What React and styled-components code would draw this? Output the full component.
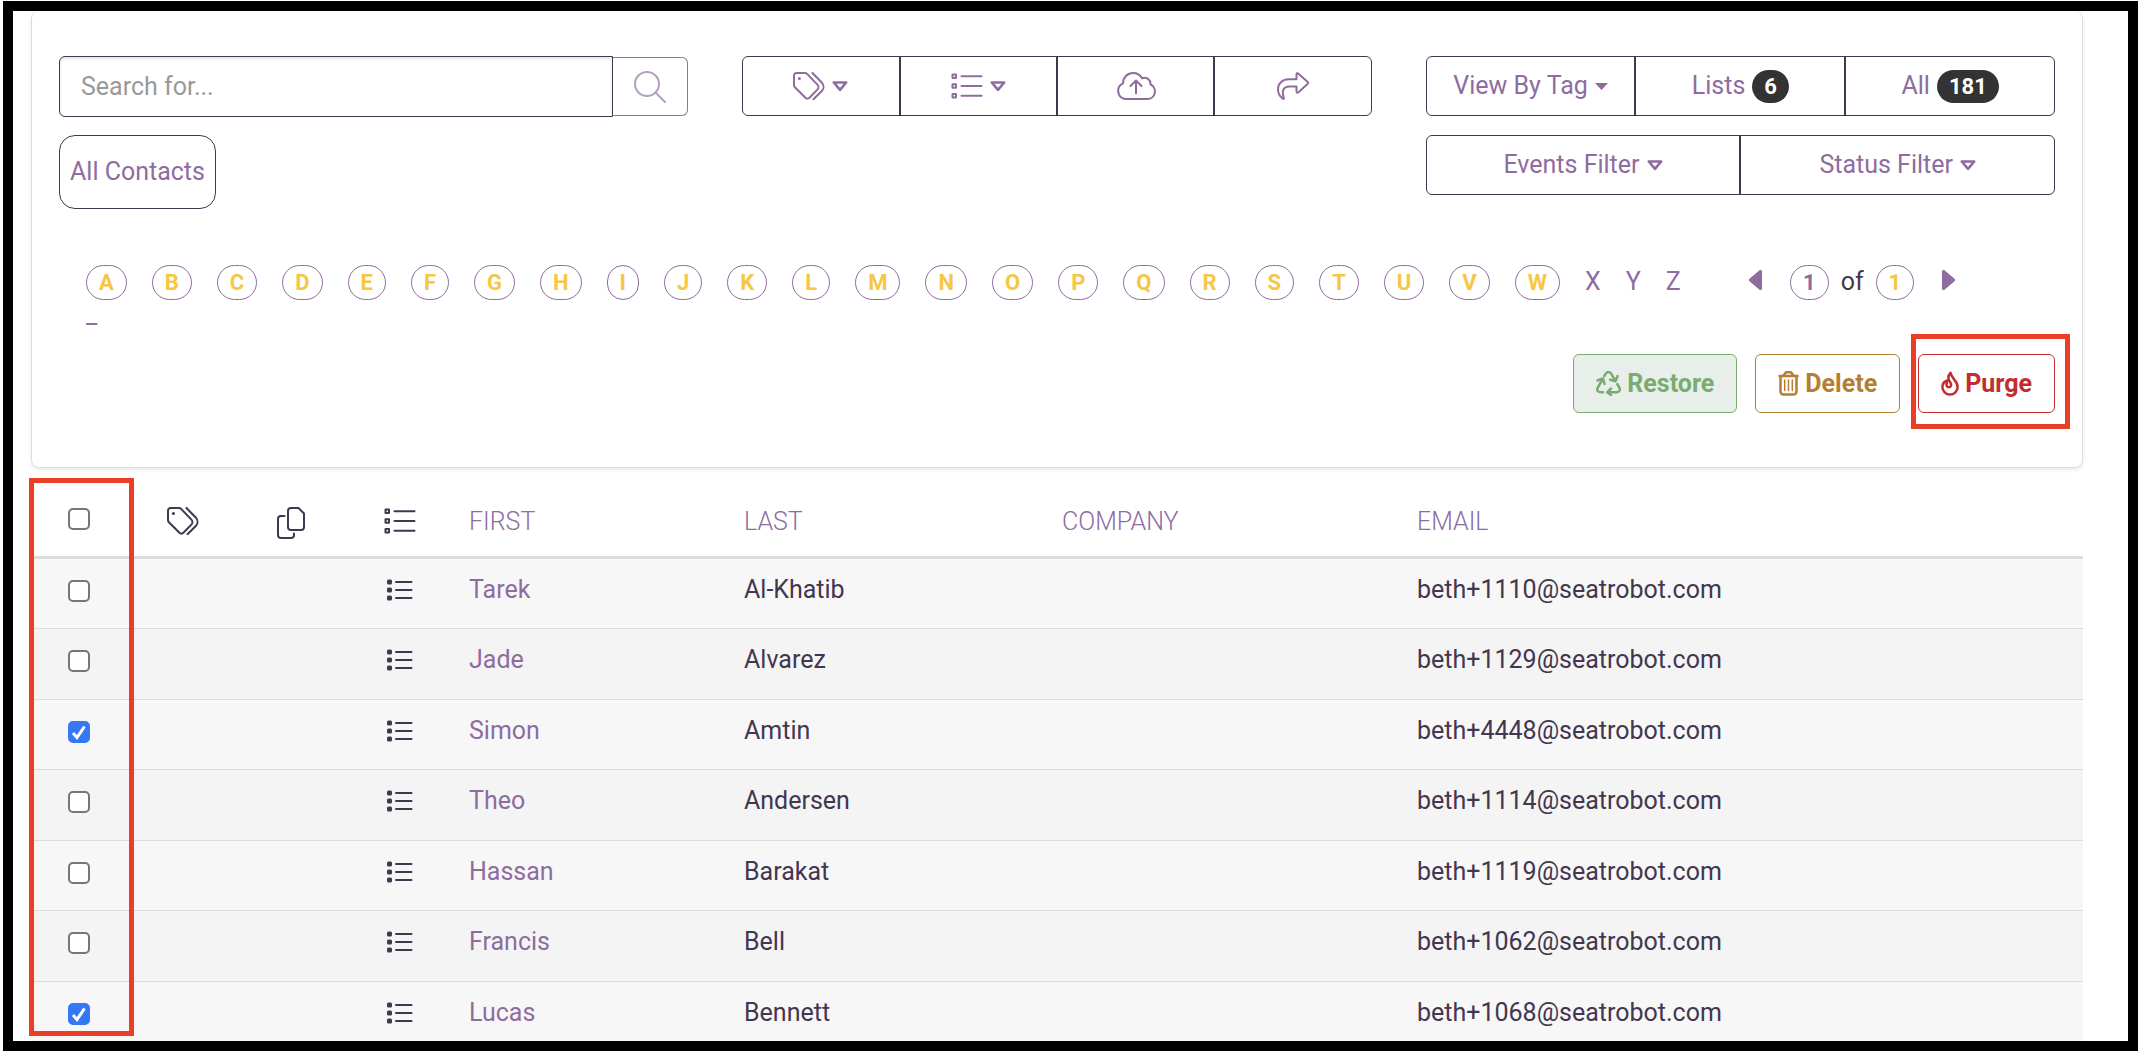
import React, {useState} from "react";
import styled, {createGlobalStyle} from "styled-components";

const LETTERS = 'ABCDEFGHIJKLMNOPQRSTUVW'.split('');
const EMPTY_LETTERS = ['X', 'Y', 'Z', '_'];

const CONTACTS = [
    {first: 'Tarek', last: 'Al-Khatib', company: '', email: 'beth+1110@seatrobot.com'},
    {first: 'Jade', last: 'Alvarez', company: '', email: 'beth+1129@seatrobot.com'},
    {first: 'Simon', last: 'Amtin', company: '', email: 'beth+4448@seatrobot.com'},
    {first: 'Theo', last: 'Andersen', company: '', email: 'beth+1114@seatrobot.com'},
    {first: 'Hassan', last: 'Barakat', company: '', email: 'beth+1119@seatrobot.com'},
    {first: 'Francis', last: 'Bell', company: '', email: 'beth+1062@seatrobot.com'},
    {first: 'Lucas', last: 'Bennett', company: '', email: 'beth+1068@seatrobot.com'},
];

const TagsIcon = () => (
    <Icon width="32" height="28" viewBox="0 0 32 28">
        <path d="M1 3.500A2.500 2.500 0 0 1 3.500 1H12a3 3 0 0 1 2.100.9l10.300 10.700a3.600 3.600 0 0 1 0 5l-8 8.200a2.800 2.800 0 0 1-4 0L1.900 15.200A3 3 0 0 1 1 13z"/>
        <path d="M19.500 1L29 10.800a6 6 0 0 1 0 8L20.500 27.300"/>
        <circle cx="6.400" cy="6.600" r="1.500" fill="currentColor" stroke="none"/>
    </Icon>
);

const ListIcon = () => (
    <Icon width="32" height="28" viewBox="0 0 32 28">
        <path d="M1.500 2.500h3.500v3.500H1.500zM1.500 12.300h3.500v3.500H1.500zM1.500 22.100h3.500v3.500H1.500z"/>
        <path d="M10.500 4.200H30.500M10.500 14H30.500M10.500 23.800H30.500"/>
    </Icon>
);

const RowListIcon = () => (
    <Icon width="26" height="22" viewBox="0 0 26 22">
        <g fill="currentColor" stroke="none">
            <rect x="0" y="0.500" width="5" height="5" rx="1.500"/>
            <rect x="0" y="8.500" width="5" height="5" rx="1.500"/>
            <rect x="0" y="16.500" width="5" height="5" rx="1.500"/>
        </g>
        <path d="M9 3H24.500M9 11H24.500M9 19H24.500"/>
    </Icon>
);

const CopyIcon = () => (
    <Icon width="28" height="32" viewBox="0 0 28 32">
        <path d="M14 1h7.500L27 6.500V20a3 3 0 0 1-3 3H14a3 3 0 0 1-3-3V4a3 3 0 0 1 3-3z"/>
        <path d="M7.500 9H4a3 3 0 0 0-3 3v16a3 3 0 0 0 3 3h10a3 3 0 0 0 3-3v-1.500"/>
    </Icon>
);

const CloudIcon = () => (
    <Icon width="40" height="28" viewBox="0 0 40 28">
        <path d="M9 27a8.300 8.300 0 0 1-2-15.700C7 5.500 11.500 1 17 1c4 0 7.300 2 9 5.300 4.300-1.600 8.800 1.200 8.500 6.200A7.600 7.600 0 0 1 31.500 27z"/>
        <path d="M20 21.500V9M14.500 14L20 8.500 25.500 14"/>
    </Icon>
);

const ShareIcon = () => (
    <Icon width="32" height="28" viewBox="0 0 32 28">
        <path d="M19.500 2.500v4.700H12C5.500 7.200 1 11 1 17.500c0 4 2 7 4.800 9.200.6.500 1.300-.1 1-.8C5.500 22 5.500 19.500 6.500 17.500 7.500 15.500 9.500 14.500 12.500 14.500h7v5c0 1.300 1 1.600 2 .8l9-8.300c.7-.6.7-1.600 0-2.200L21.500 1.700c-1-.8-2-.5-2 .8z"/>
    </Icon>
);

const SearchIcon = () => (
    <Icon width="32" height="32" viewBox="0 0 32 32">
        <circle cx="13" cy="13" r="12"/>
        <path d="M21.500 21.500L31 31"/>
    </Icon>
);

const RecycleIcon = () => (
    <Icon width="25" height="25" viewBox="0 0 25 25">
        <path d="M8.300 5l1.700-2.600a3 3 0 0 1 5 0L19.500 10M21.500 5l-2 5.200-5.300-1.500"/>
        <path d="M1.500 9.500L7 7.500l1.500 5.300M6.800 7.800L1.600 16.800a3 3 0 0 0 2.500 4.500H7"/>
        <path d="M21.300 13l2.200 3.800a3 3 0 0 1-2.500 4.500H11.500M15 17.500l-3.800 3.800L15 24"/>
    </Icon>
);

const TrashIcon = () => (
    <Icon width="21" height="25" viewBox="0 0 21 25">
        <path d="M1.500 5h18M5.500 4.500l1.700-2.300A2 2 0 0 1 9 1.300h3a2 2 0 0 1 1.800.9l1.700 2.300M2.500 5v15.500A3 3 0 0 0 5.500 23.600h10a3 3 0 0 0 3-3.100V5"/>
        <path d="M6.700 9v10.500M10.500 9v10.500M14.300 9v10.500" strokeWidth="1.500"/>
    </Icon>
);

const FireIcon = () => (
    <Icon width="18" height="25" viewBox="0 0 18 25">
        <path d="M9.500 1.800C6.500 5 7 8.500 9.200 11.200c1.600 2.200 1 5-1.200 5-2.200 0-3-2-2.200-4.200l.4-2.500C3 10.500 1.400 13 1.400 16a7.600 7.600 0 0 0 15.200 0C16.600 9.500 10.500 8 9.500 1.800z"/>
    </Icon>
);

const CaretOutline = () => (
    <Icon width="16" height="11" viewBox="0 0 16 11">
        <path d="M1.800 1.500h12.400L8 8.800z" strokeWidth="2.600"/>
    </Icon>
);

const CaretFilled = () => (
    <Icon width="13" height="7" viewBox="0 0 13 7">
        <path d="M0 0h13L6.500 7z" fill="currentColor" stroke="none"/>
    </Icon>
);

const PageArrow = ({next}) => (
    <Icon width="13" height="20" viewBox="0 0 13 20">
        <path
            d={next ? 'M1.500 1.500v17L11.500 10z' : 'M11.500 1.500v17L1.500 10z'}
            fill="currentColor"
            strokeWidth="3"
        />
    </Icon>
);

function App() {
    const [checked, setChecked] = useState([2, 6]);
    const [keyword, setKeyword] = useState('');

    const toggle = (index) => {
        setChecked(checked.includes(index) ? checked.filter((i) => i !== index) : [...checked, index]);
    };
    const toggleAll = (e) => {
        setChecked(e.target.checked ? CONTACTS.map((c, i) => i) : []);
    };

    return (
        <Page>
            <GlobalStyle/>
            <Frame>
                <Card>
                    <Toolbar>
                        <div>
                            <SearchBar>
                                <SearchInput
                                    aria-label="Search for"
                                    placeholder="Search for..."
                                    value={keyword}
                                    onChange={(e) => setKeyword(e.target.value)}
                                />
                                <SearchBtn aria-label="Search"><SearchIcon/></SearchBtn>
                            </SearchBar>
                            <AllContacts>All Contacts</AllContacts>
                        </div>
                        <div>
                            <BtnGroup>
                                <GroupBtn aria-label="Tags"><TagsIcon/><CaretOutline/></GroupBtn>
                                <GroupBtn aria-label="Lists"><ListIcon/><CaretOutline/></GroupBtn>
                                <GroupBtn aria-label="Upload"><CloudIcon/></GroupBtn>
                                <GroupBtn aria-label="Share"><ShareIcon/></GroupBtn>
                            </BtnGroup>
                        </div>
                        <Filters>
                            <BtnGroup>
                                <GroupBtn>View By Tag<CaretFilled/></GroupBtn>
                                <GroupBtn>Lists<Count>6</Count></GroupBtn>
                                <GroupBtn>All<Count>181</Count></GroupBtn>
                            </BtnGroup>
                            <BtnGroup>
                                <GroupBtn>Events Filter<CaretOutline/></GroupBtn>
                                <GroupBtn>Status Filter<CaretOutline/></GroupBtn>
                            </BtnGroup>
                        </Filters>
                    </Toolbar>
                    <LetterBar>
                        <Letters>
                            {LETTERS.map((letter) => (
                                <Pill key={letter} href={`#${letter}`}>{letter}</Pill>
                            ))}
                            {EMPTY_LETTERS.map((letter) => (
                                <PlainLetter key={letter} href={`#${letter}`}>{letter}</PlainLetter>
                            ))}
                        </Letters>
                        <Pager>
                            <PagerBtn aria-label="Previous page"><PageArrow/></PagerBtn>
                            <PageCount>
                                <Pill href="#page" $current>1</Pill>
                                of
                                <Pill href="#last">1</Pill>
                            </PageCount>
                            <PagerBtn aria-label="Next page"><PageArrow next/></PagerBtn>
                        </Pager>
                    </LetterBar>
                    <Actions>
                        <ActionBtn $color="#7aab70" $fill="#e8efea"><RecycleIcon/>Restore</ActionBtn>
                        <ActionBtn $color="#b57e30"><TrashIcon/>Delete</ActionBtn>
                        <PurgeWrap>
                            <ActionBtn $color="#c42d2d"><FireIcon/>Purge</ActionBtn>
                        </PurgeWrap>
                    </Actions>
                </Card>
                <TableWrap>
                    <Table>
                        <colgroup>
                            <Col $width={96}/>
                            <Col $width={112}/>
                            <Col $width={104}/>
                            <Col $width={114}/>
                            <Col $width={275}/>
                            <Col $width={318}/>
                            <Col $width={355}/>
                            <col/>
                        </colgroup>
                        <thead>
                            <tr>
                                <HeadCell $icon>
                                    <Checkbox
                                        aria-label="Select all"
                                        checked={checked.length === CONTACTS.length}
                                        onChange={toggleAll}
                                    />
                                </HeadCell>
                                <HeadCell $icon><TagsIcon/></HeadCell>
                                <HeadCell $icon><CopyIcon/></HeadCell>
                                <HeadCell $icon><ListIcon/></HeadCell>
                                <HeadCell>FIRST</HeadCell>
                                <HeadCell>LAST</HeadCell>
                                <HeadCell>COMPANY</HeadCell>
                                <HeadCell>EMAIL</HeadCell>
                            </tr>
                        </thead>
                        <tbody>
                            {CONTACTS.map((contact, index) => (
                                <Row key={contact.email}>
                                    <Cell $icon>
                                        <Checkbox
                                            aria-label={`Select ${contact.first} ${contact.last}`}
                                            checked={checked.includes(index)}
                                            onChange={() => toggle(index)}
                                        />
                                    </Cell>
                                    <Cell/>
                                    <Cell/>
                                    <Cell $icon><RowListIcon/></Cell>
                                    <Cell><NameLink href={`#${contact.first}`}>{contact.first}</NameLink></Cell>
                                    <Cell>{contact.last}</Cell>
                                    <Cell>{contact.company}</Cell>
                                    <Cell>{contact.email}</Cell>
                                </Row>
                            ))}
                        </tbody>
                    </Table>
                    <ColumnMark/>
                </TableWrap>
            </Frame>
        </Page>
    );
}

export default App;

const GlobalStyle = createGlobalStyle`
* { box-sizing: border-box; }
body {
    margin: 0;
    background: #fff;
    color: #43364f;
    font-family: Roboto, "Liberation Sans", sans-serif;
    font-size: 25px;
    line-height: 30px;
}
button, input { font: inherit; }
a { text-decoration: none; }
`
const Icon = styled.svg.attrs({
    'aria-hidden': true
})`
display: block;
flex: none;
fill: none;
stroke: currentColor;
stroke-width: 2;
stroke-linecap: round;
stroke-linejoin: round;
`
const Page = styled.div`
height: 100vh;
padding: 1px 2px 1px 3px;
`
const Frame = styled.main`
height: 100%;
border: 10px solid #000;
overflow: hidden;
`
const Card = styled.section`
margin: 0 45px 18px 18px;
padding: 45px 27px 54px;
border: 1px solid #dcdcdc;
border-top: none;
border-radius: 8px;
box-shadow: 0 2px 4px rgba(0, 0, 0, 0.08);
`
const Toolbar = styled.div`
display: grid;
grid-template-columns: repeat(3, 1fr);
column-gap: 54px;
`
const SearchBar = styled.div`
display: flex;
align-items: center;
margin-bottom: 18px;
`
const SearchInput = styled.input`
flex: 1;
min-width: 0;
height: 61px;
padding: 0 21px;
border: 1px solid #43364f; border-radius: 6px 0 0 6px;
background: #fff;
box-shadow: inset 0 2px 3px rgba(142, 108, 159, 0.2);
color: #43364f;
&:focus {outline: none};
&::placeholder { color: #999; opacity: 1; }
`
const SearchBtn = styled.button`
display: flex;
align-items: center;
justify-content: center;
width: 75px;
height: 59px;
padding: 0;
border: 1px solid #43364f; border-left: none; border-radius: 0 6px 6px 0;
background: none;
color: #8e6c9f;
opacity: 0.65;
cursor: pointer;
`
const AllContacts = styled.button`
height: 74px;
padding: 0 10px;
border: 1px solid #43364f; border-radius: 16px;
background: none;
color: #8e6c9f;
cursor: pointer;
`
const Filters = styled.div`
display: flex;
flex-direction: column;
gap: 19px;
`
const BtnGroup = styled.div`
display: flex;
height: 60px;
border: 1px solid #43364f; border-radius: 6px;
`
const GroupBtn = styled.button`
display: flex;
flex: 1 1 0;
align-items: center;
justify-content: center;
gap: 7px;
padding: 0;
border: none; background: none;
color: #8e6c9f;
cursor: pointer;
& + & { border-left: 2px solid #43364f; }
`
const Count = styled.span`
padding: 0 12px;
border-radius: 17px;
background: #333;
color: #fff;
font-size: 22px;
font-weight: bold;
line-height: 33px;
`
const LetterBar = styled.nav`
display: flex;
align-items: flex-start;
margin-top: 56px;
padding-left: 27px;
`
const Letters = styled.div`
display: flex;
flex: 1;
flex-wrap: wrap;
align-items: baseline;
column-gap: 25px;
`
const Pill = styled.a`
padding: 0 12px;
border: 1px solid #8e6c9f; border-radius: 18px;
color: ${(props) => (props.$current ? '#8e6c9f' : '#f6c644')};
font-size: 22px;
font-weight: bold;
line-height: 33px;
`
const PlainLetter = styled.a`
color: #8e6c9f;
`
const Pager = styled.div`
display: flex;
align-items: flex-start;
gap: 28px;
width: 355px;
padding-left: 49px;
`
const PagerBtn = styled.button`
padding: 5px 0;
border: none; background: none;
color: #8e6c9f;
cursor: pointer;
`
const PageCount = styled.div`
display: flex;
align-items: baseline;
gap: 12px;
`
const Actions = styled.div`
display: flex;
justify-content: flex-end;
gap: 18px;
margin-top: 24px;
`
const ActionBtn = styled.button`
display: flex;
align-items: center;
gap: 6px;
height: 59px;
padding: 0 22px;
border: 1px solid ${(props) => props.$color}; border-radius: 6px;
background: ${(props) => props.$fill || '#fff'};
color: ${(props) => props.$color};
font-weight: bold;
cursor: pointer;
& > svg { stroke-width: 2.500; }
`
const PurgeWrap = styled.div`
position: relative;
&::after {
    content: "";
    position: absolute;
    inset: -20px -15px -16px -7px;
    border: 5px solid #e93f26;
    pointer-events: none;
}
`
const TableWrap = styled.div`
position: relative;
margin: 0 45px 0 18px;
`
const ColumnMark = styled.div`
position: absolute;
top: -8px;
left: -2px;
width: 105px;
height: 558px;
border: 5px solid #e93f26;
pointer-events: none;
`
const Table = styled.table`
width: 100%;
border-spacing: 0;
table-layout: fixed;
`
const Col = styled.col`
width: ${(props) => props.$width}px;
`
const HeadCell = styled.th`
height: 73px;
padding: ${(props) => (props.$icon ? '21px 0 0' : '21px 0 0 12px')};
border-bottom: 3px solid #dcdcdc;
color: ${(props) => (props.$icon ? '#43364f' : '#8e6c9f')};
font-weight: 300;
text-align: left;
vertical-align: top;
& > svg { margin: 0 auto; }
`
const Row = styled.tr`
height: 70px;
background: #f7f7f7;
&:nth-child(even) { height: 71px; background: #f4f4f4; }
`
const Cell = styled.td`
padding: ${(props) => (props.$icon ? '20px 0 0' : '16px 0 0 12px')};
border-bottom: 1px solid #dcdcdc;
vertical-align: top;
& > svg { margin: 0 auto; }
`
const NameLink = styled.a`
color: #8e6c9f;
`
const Checkbox = styled.input.attrs({
    type: 'checkbox'
})`
appearance: none;
display: block;
width: 22px;
height: 22px;
margin: 1px auto 0;
border: 2px solid #767676; border-radius: 5px;
background: #fff;
cursor: pointer;
&:checked {
    border-color: #3478f6;
    background: #3478f6 url("data:image/svg+xml,%3Csvg xmlns='http://www.w3.org/2000/svg' viewBox='0 0 18 18'%3E%3Cpath d='M3 10l4 4.500L14.500 3.500' fill='none' stroke='%23fff' stroke-width='3'/%3E%3C/svg%3E") center no-repeat;
}
`
